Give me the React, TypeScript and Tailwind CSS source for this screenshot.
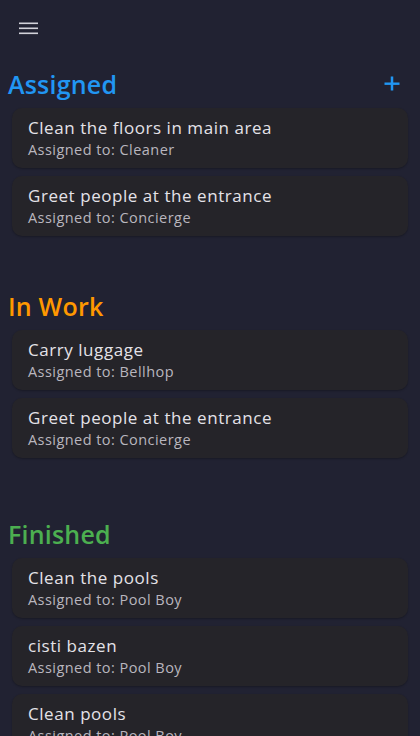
const sections = [
  {
    title: "Assigned",
    color: "text-[#2196f3]",
    add: true,
    space: "mt-[8px]",
    tasks: [
      { name: "Clean the floors in main area", who: "Cleaner" },
      { name: "Greet people at the entrance", who: "Concierge" },
    ],
  },
  {
    title: "In Work",
    color: "text-[#ff9800]",
    add: false,
    space: "mt-[50px]",
    tasks: [
      { name: "Carry luggage", who: "Bellhop" },
      { name: "Greet people at the entrance", who: "Concierge" },
    ],
  },
  {
    title: "Finished",
    color: "text-[#4caf50]",
    add: false,
    space: "mt-[56px]",
    tasks: [
      { name: "Clean the pools", who: "Pool Boy" },
      { name: "cisti bazen", who: "Pool Boy" },
      { name: "Clean pools", who: "Pool Boy" },
    ],
  },
];

function MenuIcon() {
  return (
    <svg width="20" height="14" viewBox="0 0 20 14" className="text-[#d2d2da]">
      <rect x="0" y="0.5" width="19" height="1.6" fill="currentColor" />
      <rect x="0" y="5.5" width="19" height="1.6" fill="currentColor" />
      <rect x="0" y="10.5" width="19" height="1.6" fill="currentColor" />
    </svg>
  );
}

function PlusIcon() {
  return (
    <svg width="16" height="16" viewBox="0 0 16 16" className="text-[#2196f3]">
      <rect x="6.75" y="0.5" width="2.5" height="14" fill="currentColor" />
      <rect x="0.5" y="6.5" width="15" height="2.4" fill="currentColor" />
    </svg>
  );
}

export default function App() {
  return (
    <div
      className="h-[736px] w-full overflow-hidden bg-[#212232] text-[#e2e0e6]"
      style={{ fontFamily: '"Open Sans", "Liberation Sans", sans-serif' }}
    >
      <header className="flex h-[56px] items-start pl-[19px] pt-[22px]">
        <MenuIcon />
      </header>

      {sections.map((s) => (
        <section key={s.title} className={s.space}>
          <div className="flex h-[44px] items-start justify-between pl-[8px] pr-[20px]">
            <h2 className={`text-[25px] font-semibold leading-[40px] tracking-[0.2px] ${s.color}`}>
              {s.title}
            </h2>
            {s.add && (
              <div className="flex h-[40px] items-center">
                <PlusIcon />
              </div>
            )}
          </div>
          <div className="flex flex-col gap-2 px-3">
            {s.tasks.map((t, i) => (
              <div
                key={i}
                className="h-[60px] rounded-[10px] bg-[#252429] px-4 pt-[7px] shadow-[0_1px_2px_rgba(0,0,0,0.25)]"
              >
                <div className="text-[17px] font-medium leading-[25px] tracking-[0.55px] text-[#e4e2e8]">
                  {t.name}
                </div>
                <div className="text-[14.5px] leading-[20px] tracking-[0.45px] text-[#b9b6be]">
                  Assigned to: {t.who}
                </div>
              </div>
            ))}
          </div>
        </section>
      ))}
    </div>
  );
}
